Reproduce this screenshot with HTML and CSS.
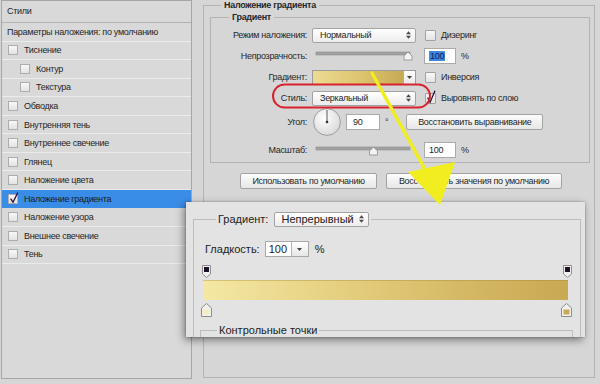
FILE: index.html
```html
<!DOCTYPE html>
<html lang="ru">
<head>
  <meta charset="UTF-8">
  <meta name="viewport" content="width=device-width, initial-scale=1.0">
  <title>Наложение градиента</title>
  <link rel="stylesheet" href="styles.css">
</head>

<body>
  <!-- Styles list -->
  <aside class="styles-panel">
    <div class="panel-title">Стили</div>
    <ul class="style-list">
      <li class="style-item style-item--plain">Параметры наложения: по умолчанию</li>
      <li class="style-item"><span class="check"></span>Тиснение</li>
      <li class="style-item style-item--sub"><span class="check"></span>Контур</li>
      <li class="style-item style-item--sub"><span class="check"></span>Текстура</li>
      <li class="style-item"><span class="check"></span>Обводка</li>
      <li class="style-item"><span class="check"></span>Внутренняя тень</li>
      <li class="style-item"><span class="check"></span>Внутреннее свечение</li>
      <li class="style-item"><span class="check"></span>Глянец</li>
      <li class="style-item"><span class="check"></span>Наложение цвета</li>
      <li class="style-item is-active">
        <span class="check">
          <svg class="tick" viewBox="0 0 10 10"><path d="M2 4.5 L5 9 L11 -3"></path></svg>
        </span>Наложение градиента
      </li>
      <li class="style-item"><span class="check"></span>Наложение узора</li>
      <li class="style-item"><span class="check"></span>Внешнее свечение</li>
      <li class="style-item"><span class="check"></span>Тень</li>
    </ul>
  </aside>

  <!-- Gradient overlay settings -->
  <main class="main">
    <fieldset class="group">
      <legend class="group-title">Наложение градиента</legend>

      <fieldset class="group group--inner">
        <legend class="group-title">Градиент</legend>

        <div class="row">
          <span class="label">Режим наложения:</span>
          <div class="select">Нормальный
            <svg class="updown" viewBox="0 0 6 9"><path d="M3 0 L6 3.5 H0Z M3 9 L0 5.5 H6Z"></path></svg>
          </div>
          <span class="check check--big"></span><span class="check-label">Дизеринг</span>
        </div>

        <div class="row">
          <span class="label">Непрозрачность:</span>
          <svg class="slider" viewBox="0 0 104 16">
            <rect class="slider-track" x="4" y="4" width="94" height="3"></rect>
            <path class="slider-thumb" d="M96 4 L100 8 V12 H92 V8Z"></path>
          </svg>
          <div class="field"><span class="selected-text">100</span></div>
          <span class="unit">%</span>
        </div>

        <div class="row">
          <span class="label">Градиент:</span>
          <div class="swatch">
            <div class="swatch-fill"></div>
            <div class="swatch-arrow"><svg viewBox="0 0 5 3"><path d="M0 0 H5 L2.5 3Z"></path></svg></div>
          </div>
          <span class="check check--big"></span><span class="check-label">Инверсия</span>
        </div>

        <div class="row">
          <span class="label">Стиль:</span>
          <div class="select">Зеркальный
            <svg class="updown" viewBox="0 0 6 9"><path d="M3 0 L6 3.5 H0Z M3 9 L0 5.5 H6Z"></path></svg>
          </div>
          <span class="check check--big">
            <svg class="tick" viewBox="0 0 11 11"><path d="M2 4.5 L5 10 L11 -4"></path></svg>
          </span><span class="check-label">Выровнять по слою</span>
        </div>

        <div class="row row--angle">
          <span class="label">Угол:</span>
          <svg class="dial" viewBox="0 0 28 28">
            <defs>
              <radialGradient id="dialFill" cx="0.4" cy="0.35" r="0.7">
                <stop offset="0" stop-color="#ffffff"></stop>
                <stop offset="1" stop-color="#d8d8d8"></stop>
              </radialGradient>
            </defs>
            <circle cx="14" cy="14" r="13.4" fill="url(#dialFill)" stroke="#9d9d9d"></circle>
            <line x1="14" y1="14" x2="14" y2="2" stroke="#5a5a5a" stroke-width="1"></line>
            <circle cx="14" cy="14" r="1.3" fill="#333"></circle>
          </svg>
          <div class="field field--angle">90</div>
          <span class="unit">°</span>
          <button class="btn btn--align">Восстановить выравнивание</button>
        </div>

        <div class="row row--scale">
          <span class="label">Масштаб:</span>
          <svg class="slider" viewBox="0 0 104 16">
            <rect class="slider-track" x="4" y="5" width="94" height="3"></rect>
            <path class="slider-thumb" d="M61.5 5 L65.5 9 V13 H57.5 V9Z"></path>
          </svg>
          <div class="field">100</div>
          <span class="unit">%</span>
        </div>
      </fieldset>

      <div class="buttons">
        <button class="btn btn--default">Использовать по умолчанию</button>
        <button class="btn btn--reset">Восстановить значения по умолчанию</button>
      </div>
    </fieldset>
  </main>

  <!-- Zoomed gradient editor callout -->
  <div class="zoom-box">
    <fieldset class="zoom-group">
      <legend class="zoom-legend">
        <span>Градиент:</span>
        <div class="select select--big">Непрерывный
          <svg class="updown" viewBox="0 0 6 9"><path d="M3 0 L6 3.5 H0Z M3 9 L0 5.5 H6Z"></path></svg>
        </div>
      </legend>

      <div class="smooth-row">
        <span>Гладкость:</span>
        <div class="stepper">
          <span class="stepper-value">100</span>
          <span class="stepper-arrow"><svg viewBox="0 0 5 3"><path d="M0 0 H5 L2.5 3Z"></path></svg></span>
        </div>
        <span class="unit">%</span>
      </div>

      <div class="stops stops--top">
        <svg class="stop-top" viewBox="0 0 9 13"><path d="M0.5 0.5 H8.5 V9 L4.5 12.5 L0.5 9Z"></path><rect x="2" y="2" width="5" height="5"></rect></svg>
        <svg class="stop-top" viewBox="0 0 9 13"><path d="M0.5 0.5 H8.5 V9 L4.5 12.5 L0.5 9Z"></path><rect x="2" y="2" width="5" height="5"></rect></svg>
      </div>

      <div class="gradient-bar"></div>

      <div class="stops stops--bottom">
        <svg class="stop-bottom" viewBox="0 0 11 14"><path d="M5.5 0.5 L10.5 5 V13.5 H0.5 V5Z"></path><rect class="stop-light" x="2.5" y="6.5" width="6" height="5"></rect></svg>
        <svg class="stop-bottom" viewBox="0 0 11 14"><path d="M5.5 0.5 L10.5 5 V13.5 H0.5 V5Z"></path><rect class="stop-dark" x="2.5" y="6.5" width="6" height="5"></rect></svg>
      </div>

      <fieldset class="points">
        <legend class="points-legend">Контрольные точки</legend>
      </fieldset>
    </fieldset>
  </div>

  <!-- Annotations -->
  <svg class="marks" viewBox="0 0 600 384">
    <rect x="273" y="84.5" width="157" height="23" rx="11.5" fill="none" stroke="#d8222e" stroke-width="2"></rect>
    <path d="M372 73 L427 173" stroke="#f1ed1e" stroke-width="3.5" stroke-linecap="round" fill="none"></path>
    <polygon points="408,172 455,162 440,205" fill="#f1ed1e"></polygon>
  </svg>
</body>
</html>
```

FILE: styles.css
```css
* {
  margin: 0;
  padding: 0;
  box-sizing: border-box;
}

body {
  position: relative;
  display: flex;
  width: 600px;
  height: 384px;
  overflow: hidden;
  background: #d6d6d6;
  font-family: "Liberation Sans", Arial, sans-serif;
  font-size: 9px;
  letter-spacing: -0.3px;
  color: #262626;
}

/* Styles list */

.styles-panel {
  flex: none;
  width: 191px;
  height: 379px;
  margin-left: 1px;
  border: 1px solid #a6a6a6;
  background: #d9d9d9;
}

.panel-title {
  height: 22px;
  padding-left: 5px;
  line-height: 21px;
  border-bottom: 1px solid #b3b3b3;
}

.style-list {
  list-style: none;
}

.style-item {
  display: flex;
  align-items: center;
  height: 18.55px;
  padding-left: 6px;
  border-bottom: 1px solid #ebebeb;
  white-space: nowrap;
}

.style-item--plain {
  padding-left: 5px;
}

.style-item--sub {
  padding-left: 18px;
}

.style-item.is-active {
  background: #3a8de6;
  border-bottom-color: #3a8de6;
  color: #1a1a1a;
}

.check {
  flex: none;
  width: 10px;
  height: 10px;
  margin-right: 6px;
  border: 1px solid #adadad;
  background: linear-gradient(#f8f8f8, #e3e3e3);
}

.check--big {
  width: 11px;
  height: 11px;
  margin: 0 0 0 9px;
  border-color: #a2a2a2;
  border-radius: 1px;
}

.tick {
  display: block;
  width: 100%;
  height: 100%;
  overflow: visible;
}

.tick path {
  fill: none;
  stroke: #2a1032;
  stroke-width: 1.6;
}

/* Settings */

.main {
  flex: 1;
  display: flex;
  flex-direction: column;
  padding: 0 5px 6px 11px;
}

.group {
  flex: 1;
  min-width: 0;
  padding: 1px 4px 0 6px;
  border: 1px solid #b3b3b3;
}

.group-title {
  margin-left: 11px;
  padding: 0 3px;
  font-weight: bold;
  line-height: 10px;
}

.group--inner {
  flex: none;
  padding: 4px 0 4px 0;
}

.group--inner > .group-title {
  margin-left: 18px;
  line-height: 12px;
}

.row {
  display: flex;
  align-items: center;
  height: 16px;
}

.row + .row {
  margin-top: 5px;
}

.row.row--angle {
  height: 28px;
  margin-top: 2px;
}

.row.row--scale {
  margin-top: 6px;
}

.label {
  flex: none;
  width: 96px;
  margin-right: 5px;
  text-align: right;
  white-space: nowrap;
}

.select {
  display: flex;
  align-items: center;
  width: 104px;
  height: 15px;
  padding-left: 7px;
  border: 1px solid #a3a3a3;
  border-radius: 2px;
  background: linear-gradient(#ffffff, #ececec);
  white-space: nowrap;
}

.updown {
  flex: none;
  width: 5px;
  height: 8px;
  margin: 0 4px 0 auto;
  fill: #4a4a4a;
}

.check-label {
  margin-left: 5px;
  white-space: nowrap;
}

.slider {
  flex: none;
  width: 104px;
  height: 16px;
}

.slider-track {
  fill: #a2a2a2;
  stroke: #8c8c8c;
  stroke-width: 0.6;
}

.slider-thumb {
  fill: #f3f3f3;
  stroke: #8a8a8a;
  stroke-width: 0.8;
}

.field {
  flex: none;
  width: 32px;
  height: 16px;
  margin-left: 8px;
  padding-left: 4px;
  border: 1px solid #aaaaaa;
  background: #fff;
  line-height: 14px;
}

.field--angle {
  width: 34px;
  margin-left: 5px;
  padding-left: 6px;
}

.selected-text {
  padding: 0 1px;
  background: #3f86e0;
  color: #10205a;
}

.unit {
  margin-left: 5px;
}

.swatch {
  display: flex;
  width: 104px;
  height: 15px;
  border: 1px solid #9c9c9c;
}

.swatch-fill {
  flex: 1;
  background: linear-gradient(90deg, #ecdc92, #dcc36e 55%, #c8aa55);
}

.swatch-arrow {
  display: flex;
  align-items: center;
  justify-content: center;
  width: 12px;
  border-left: 1px solid #b0b0b0;
  background: linear-gradient(#ffffff, #e8e8e8);
}

.swatch-arrow svg,
.stepper-arrow svg {
  width: 5px;
  height: 3px;
  fill: #444;
}

.dial {
  flex: none;
  width: 28px;
  height: 28px;
  margin-left: 1px;
}

.btn {
  height: 16px;
  border: 1px solid #a3a3a3;
  border-radius: 2px;
  background: linear-gradient(#fcfcfc, #e7e7e7);
  font-family: inherit;
  font-size: 9px;
  letter-spacing: -0.3px;
  color: #262626;
  white-space: nowrap;
}

.btn--align {
  width: 137px;
  margin-left: 18px;
}

.buttons {
  display: flex;
  gap: 9px;
  margin: 10px 0 0 30px;
}

.btn--default {
  width: 137px;
}

.btn--reset {
  width: 176px;
}

/* Zoomed callout */

.zoom-box {
  position: absolute;
  left: 186px;
  top: 202px;
  width: 399px;
  height: 135px;
  overflow: hidden;
  padding: 9px 0 0 7px;
  background: #e3e3e3;
  box-shadow: -2px 3px 8px rgba(0, 0, 0, 0.45), 0 0 2px rgba(0, 0, 0, 0.3);
  font-size: 11px;
  letter-spacing: 0;
  color: #222;
}

.zoom-group {
  width: 388px;
  padding: 0 7px 0 7px;
  border: 1px solid #bdbdbd;
}

.zoom-legend {
  display: flex;
  align-items: center;
  gap: 6px;
  height: 16px;
  margin-left: 15px;
  padding: 0 2px;
}

.select--big {
  width: 95px;
  padding-left: 6px;
  font-size: 11px;
}

.smooth-row {
  display: flex;
  align-items: center;
  height: 16px;
  margin: 14px 0 0 4px;
}

.stepper {
  display: flex;
  height: 16px;
  margin-left: 5px;
  border: 1px solid #a8a8a8;
}

.stepper-value {
  width: 25px;
  padding-left: 3px;
  background: #fff;
  line-height: 14px;
}

.stepper-arrow {
  display: flex;
  align-items: center;
  justify-content: center;
  width: 17px;
  border-left: 1px solid #b5b5b5;
  background: linear-gradient(#ffffff, #e6e6e6);
}

.smooth-row .unit {
  margin-left: 6px;
}

.stops {
  display: flex;
  justify-content: space-between;
}

.stops--top {
  height: 13px;
  margin-top: 8px;
  padding: 0 1px;
}

.stop-top {
  width: 9px;
  height: 13px;
}

.stop-top path,
.stop-bottom path {
  fill: #f0f0f0;
  stroke: #8d8d8d;
}

.stop-top rect {
  fill: #1d0f26;
}

.gradient-bar {
  width: 365px;
  height: 20px;
  margin: 2px 0 0 2px;
  background: linear-gradient(90deg, #f4e8a4, #e6d182 35%, #d6b966 70%, #c9a952);
  box-shadow: inset 0 1px 0 rgba(160, 130, 40, 0.35);
}

.stops--bottom {
  height: 14px;
  margin-top: 3px;
  padding-right: 1px;
}

.stop-bottom {
  width: 11px;
  height: 14px;
}

.stop-light {
  fill: #f6eeb8;
}

.stop-dark {
  fill: #c9aa52;
}

.points {
  width: 373px;
  height: 40px;
  margin: 6px 0 0 -1px;
  border: 1px solid #bdbdbd;
}

.points-legend {
  margin-left: 16px;
  padding: 0 2px;
  line-height: 14px;
}

/* Annotations */

.marks {
  position: absolute;
  left: 0;
  top: 0;
  width: 600px;
  height: 384px;
  pointer-events: none;
}
```
